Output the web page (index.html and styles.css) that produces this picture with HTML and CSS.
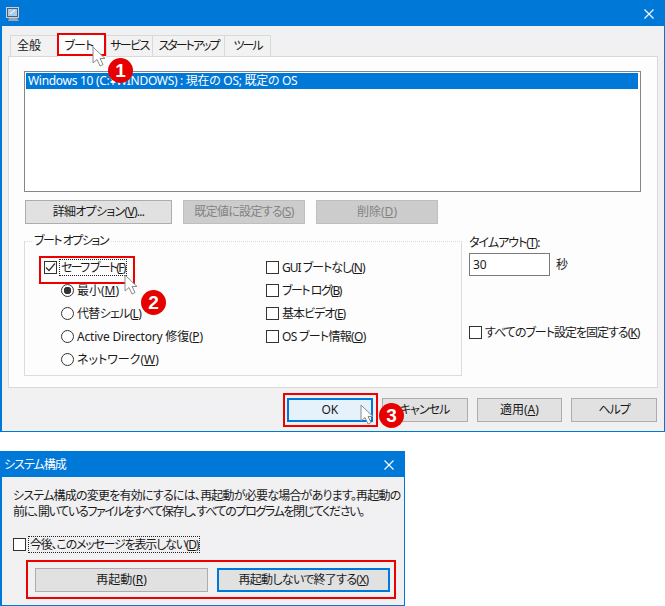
FILE: index.html
```html
<!DOCTYPE html>
<html lang="ja">
<head>
<meta charset="utf-8">
<title>システム構成</title>
<link rel="stylesheet" href="styles.css">
</head>
<body>
<main class="stage">
  <section class="window main-window">
    <header class="titlebar">
      <svg class="app-icon" width="16" height="17" viewBox="0 0 16 17"><rect x="1.5" y="1.5" width="12" height="10" fill="#4a5f7a" stroke="#c8d0dc"/><rect x="3" y="3" width="9" height="7" fill="#a9cdea"/><path d="M5 8l5-4" stroke="#fff"/><path d="M4 12h8l2 3H3z" fill="#9aa6b6"/></svg>
      <svg class="close" width="10" height="10" viewBox="0 0 10 10"><path d="M.5.5l9 9M9.5.5l-9 9" stroke="#fff" stroke-width="1.1"/></svg>
    </header>
    <div class="window-body">
      <nav class="tabs">
        <span class="tab t1">全般</span>
        <span class="tab t2 active">ブート</span>
        <span class="tab t3">サービス</span>
        <span class="tab t4">スタートアップ</span>
        <span class="tab t5">ツール</span>
      </nav>
      <div class="panel">
        <div class="listbox"><div class="list-item">Windows 10 (C:¥WINDOWS) : 現在の OS; 既定の OS</div></div>
        <div class="panel-buttons">
          <button class="btn wide ls-7">詳細オプション(<u>V</u>)...</button>
          <button class="btn disabled mid ls-7">既定値に設定する(<u>S</u>)</button>
          <button class="btn disabled mid">削除(<u>D</u>)</button>
        </div>
        <div class="options">
          <fieldset class="group">
            <legend class="ls-15">ブート オプション</legend>
            <div class="col col-left">
              <label class="row"><span class="check checked"><svg width="11" height="11" viewBox="0 0 11 11"><path d="M1 5.500l3 3 6-7" fill="none" stroke="#333" stroke-width="1.2"/></svg></span><span class="focus ls-17">セーフ ブート(<u>F</u>)</span></label>
              <label class="row indent"><span class="radio on"></span><span>最小(<u>M</u>)</span></label>
              <label class="row indent"><span class="radio"></span><span class="ls-7">代替シェル(<u>L</u>)</span></label>
              <label class="row indent"><span class="radio"></span><span class="ls-2">Active Directory 修復(<u>P</u>)</span></label>
              <label class="row indent"><span class="radio"></span><span>ネットワーク(<u>W</u>)</span></label>
            </div>
            <div class="col">
              <label class="row"><span class="check"></span><span class="ls-10">GUI ブートなし(<u>N</u>)</span></label>
              <label class="row"><span class="check"></span><span class="ls-15">ブート ログ(<u>B</u>)</span></label>
              <label class="row"><span class="check"></span><span class="ls-10">基本ビデオ(<u>E</u>)</span></label>
              <label class="row"><span class="check"></span><span class="ls-7">OS ブート情報(<u>O</u>)</span></label>
            </div>
          </fieldset>
          <div class="timeout">
            <div class="timeout-label ls-10">タイムアウト(<u>T</u>):</div>
            <div class="timeout-field"><span class="input">30</span><span>秒</span></div>
            <label class="row lock"><span class="check"></span><span class="ls-10">すべてのブート設定を固定する(<u>K</u>)</span></label>
          </div>
        </div>
      </div>
      <footer class="footer">
        <button class="btn foot ok">OK</button>
        <button class="btn foot ls-10">キャンセル</button>
        <button class="btn foot">適用(<u>A</u>)</button>
        <button class="btn foot ls-10">ヘルプ</button>
      </footer>
    </div>
  </section>

  <section class="window dialog">
    <header class="titlebar dialog-title">
      <span class="ls-10">システム構成</span>
      <svg class="close" width="10" height="10" viewBox="0 0 10 10"><path d="M.5.5l9 9M9.5.5l-9 9" stroke="#fff" stroke-width="1.1"/></svg>
    </header>
    <div class="dialog-body">
      <p class="message"><span class="line-a">システム構成の変更を有効にするには、再起動が必要な場合があります。再起動の</span><span class="line-b">前に、開いているファイルをすべて保存し、すべてのプログラムを閉じてください。</span></p>
      <label class="row dont-show"><span class="check"></span><span class="focus ls-12">今後、このメッセージを表示しない(<u>D</u>)</span></label>
      <div class="dialog-buttons">
        <button class="btn restart">再起動(<u>R</u>)</button>
        <button class="btn restart primary ls-7">再起動しないで終了する(<u>X</u>)</button>
      </div>
    </div>
  </section>

  <div class="mark m1"></div>
  <div class="mark m2"></div>
  <div class="mark m3"></div>
  <div class="mark m4"></div>

  <svg class="cursor c1" width="14" height="22" viewBox="0 0 14 22"><path d="M1 1v16l4-3.500 3 6.500 3-1.500-3-6h5z" fill="#fff" stroke="#8a8a8a"/></svg>
  <svg class="cursor c2" width="14" height="22" viewBox="0 0 14 22"><path d="M1 1v16l4-3.500 3 6.500 3-1.500-3-6h5z" fill="#fff" stroke="#8a8a8a"/></svg>
  <svg class="cursor c3" width="14" height="22" viewBox="0 0 14 22"><path d="M1 1v16l4-3.500 3 6.500 3-1.500-3-6h5z" fill="#fff" stroke="#8a8a8a"/></svg>

  <span class="badge b1">1</span>
  <span class="badge b2">2</span>
  <span class="badge b3">3</span>
</main>
</body>
</html>
```
FILE: styles.css
```css
* { box-sizing: border-box; }
html, body { margin: 0; padding: 0; background: #fff; }
body {
  font-family: "Noto Sans", "Noto Sans CJK JP", sans-serif;
  font-size: 12px;
  font-feature-settings: "palt";
  color: #1a1a1a;
  line-height: 16px;
}
.ls-2 { letter-spacing: -.2px; }
.ls-7 { letter-spacing: -.7px; }
.ls-10 { letter-spacing: -1px; }
.ls-12 { letter-spacing: -1.2px; }
.ls-15 { letter-spacing: -1.5px; }
.ls-17 { letter-spacing: -1.7px; }
.stage { position: relative; width: 665px; height: 606px; overflow: hidden; }
.window {
  border: 1px solid #0078d7;
  border-left-width: 2px;
  background: repeating-conic-gradient(#f2eff0 0 25%, #eff1f3 0 50%) 0 0 / 2px 2px;
}
.main-window { width: 665px; height: 432px; margin-bottom: 19px; }
.dialog { width: 405px; height: 155px; }
.titlebar {
  display: flex;
  align-items: center;
  justify-content: space-between;
  height: 25px;
  padding: 0 10px 0 3px;
  background: #0078d7;
  color: #fff;
}
.dialog-title { padding-left: 2px; }
.app-icon { margin-top: 1px; }
.window-body { padding: 8px 6px 0 6px; }
.tabs { display: flex; height: 22px; padding-left: 2px; align-items: flex-end; white-space: nowrap; }
.tab {
  display: flex;
  align-items: center;
  justify-content: center;
  height: 21px;
  border: 1px solid #d9d9d9;
  border-bottom: 0;
  border-left-width: 0;
  background: #f2f2f2;
}
.t1 { width: 48px; border-left-width: 1px; padding-right: 10px; }
.t2 { width: 49px; letter-spacing: -.8px; }
.t3 { width: 46px; letter-spacing: -1.6px; }
.t4 { width: 72px; letter-spacing: -2px; }
.t5 { width: 46px; letter-spacing: -2px; }
.tab.active { height: 23px; margin-bottom: -1px; background: #fdfdfd; position: relative; z-index: 1; padding-right: 6px; }
.panel {
  height: 332px;
  padding: 14px 16px 0 15px;
  border: 1px solid #d9d9d9;
  background: #fdfdfd;
}
.listbox {
  height: 121px;
  padding: 1px;
  border: 1px solid #82878c;
  background: #fff;
}
.list-item { height: 16px; line-height: 16px; padding-left: 2px; margin-right: 1px; background: #0078d7; color: #fff; letter-spacing: -.3px; }
.panel-buttons { display: flex; gap: 11px; margin-top: 8px; }
.btn {
  height: 24px;
  padding: 0;
  border: 1px solid #adadad;
  background: #e1e1e1;
  color: #1a1a1a;
  font-family: inherit;
  font-size: inherit;
  line-height: inherit;
  font-feature-settings: inherit;
}
.wide { width: 147px; margin-left: 1px; }
.mid { width: 122px; }
.disabled { background: #cccccc; border-color: #bfbfbf; color: #838383; }
.options { display: flex; gap: 7px; margin-top: 10px; }
.group {
  display: flex;
  gap: 37px;
  flex: none;
  width: 438px;
  height: 142px;
  min-width: 0;
  margin: 0;
  padding: 8px 0 0 19px;
  border: 1px solid #dcdcdc;
  border-style: dotted solid solid;
}
.group legend { padding: 0 2px; margin-left: -12px; line-height: 14px; }
.col { display: flex; flex-direction: column; }
.col-left { width: 185px; }
.row { display: flex; align-items: center; gap: 3px; height: 23px; white-space: nowrap; }
.indent { margin-left: 17px; }
.check {
  display: flex;
  align-items: center;
  justify-content: center;
  flex: none;
  width: 13px;
  height: 13px;
  border: 1px solid #333;
  background: #fff;
}
.radio {
  flex: none;
  width: 13px;
  height: 13px;
  border: 1px solid #333;
  border-radius: 50%;
  background: #fff;
}
.radio.on { background: radial-gradient(circle, #333 0 3.500px, #fff 4px); }
.focus { padding: 0 1px; outline: 1px dotted #222; line-height: 15px; }
.timeout { flex: 1; min-width: 0; }
.timeout-label { height: 13px; line-height: 18px; }
.timeout-field { display: flex; align-items: center; gap: 6px; margin-top: 6px; }
.input { width: 81px; height: 23px; padding-left: 3px; line-height: 21px; border: 1px solid #7a7a7a; background: #fff; }
.lock { margin-top: 45px; }
.footer { display: flex; justify-content: flex-end; gap: 9px; margin-top: 10px; padding-right: 1px; }
.foot { width: 85.750px; }
.ok { background: #e5f1fb; border: 2px solid #0078d7; }
.dialog-body { padding: 11px 0 0 11px; }
.message { margin: 0; line-height: 16px; white-space: nowrap; }
.line-a, .line-b { display: block; }
.line-a { letter-spacing: -.78px; }
.line-b { letter-spacing: -1.37px; }
.dont-show { margin-top: 13px; }
.dialog-buttons { display: flex; gap: 9px; margin: 12px 0 0 22px; }
.restart { width: 173px; }
.primary { border: 2px solid #0078d7; }
.mark { position: absolute; border: 2px solid #ee0000; }
.m1 { left: 57px; top: 33px; width: 49px; height: 23px; z-index: 2; }
.m2 { left: 39px; top: 256px; width: 96px; height: 28px; }
.m3 { left: 283px; top: 393px; width: 95px; height: 34px; }
.m4 { left: 26px; top: 560px; width: 370px; height: 39px; }
.cursor { position: absolute; z-index: 3; }
.c1 { left: 92px; top: 46px; }
.c2 { left: 124px; top: 274px; }
.c3 { left: 360px; top: 404px; }
.badge {
  position: absolute;
  z-index: 4;
  display: flex;
  align-items: center;
  justify-content: center;
  width: 25px;
  height: 25px;
  border-radius: 50%;
  background: #e60000;
  color: #fff;
  font-family: "Liberation Sans", sans-serif;
  font-size: 19px;
  font-weight: 700;
}
.b1 { left: 108px; top: 58px; }
.b2 { left: 141px; top: 290px; }
.b3 { left: 379px; top: 403px; }
```
